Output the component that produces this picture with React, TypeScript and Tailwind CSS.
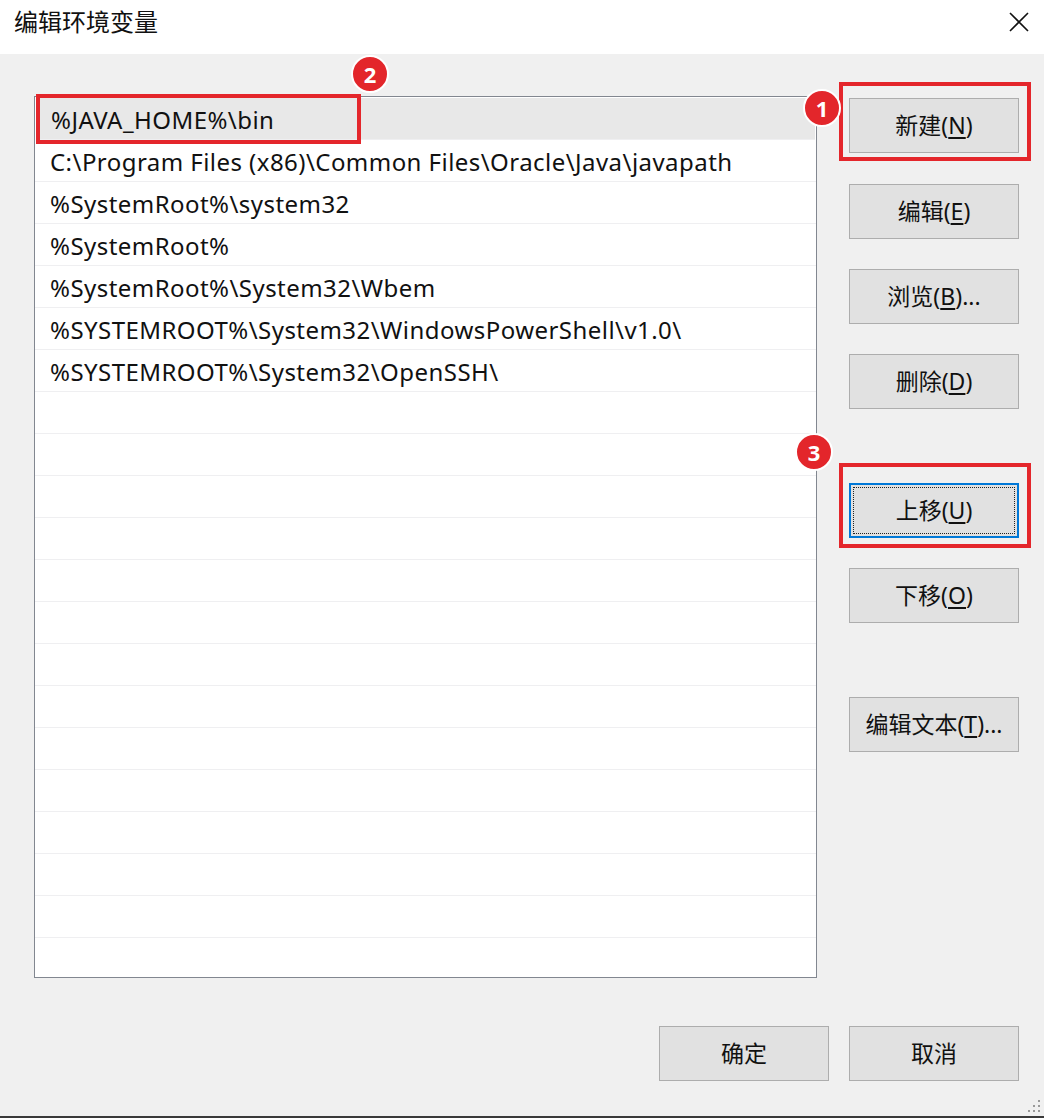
import React from 'react';

const paths = [
    '%JAVA_HOME%\\bin',
    'C:\\Program Files (x86)\\Common Files\\Oracle\\Java\\javapath',
    '%SystemRoot%\\system32',
    '%SystemRoot%',
    '%SystemRoot%\\System32\\Wbem',
    '%SYSTEMROOT%\\System32\\WindowsPowerShell\\v1.0\\',
    '%SYSTEMROOT%\\System32\\OpenSSH\\',
];

const rows = [...paths, ...Array(14).fill('')];

const font = { fontFamily: '"Noto Sans", "Noto Sans CJK SC", sans-serif' };

function Key({ label, k, suffix = '' }: { label: string; k?: string; suffix?: string }) {
    return (
        <span>
            {label}
            {k && (
                <>
                    (<span className="underline underline-offset-[3px]">{k}</span>)
                </>
            )}
            {suffix}
        </span>
    );
}

function WinButton({ children, focused = false, className = '' }: { children: React.ReactNode; focused?: boolean; className?: string }) {
    return (
        <button
            type="button"
            className={
                'relative w-[170px] h-[55px] bg-[#e1e1e1] text-[23px] text-[#111] flex items-center justify-center ' +
                (focused ? 'border-2 border-[#0078d7] ' : 'border border-[#adadad] ') +
                className
            }
        >
            {focused && <span className="absolute inset-[2px] border border-dotted border-[#222]" />}
            {children}
        </button>
    );
}

function Badge({ n, className }: { n: number; className: string }) {
    return (
        <div
            className={
                'absolute w-[38px] h-[38px] rounded-full bg-[#e3262b] border-2 border-white text-white text-[22px] font-bold flex items-center justify-center z-20 ' +
                className
            }
        >
            {n}
        </div>
    );
}

export default function App() {
    return (
        <div className="w-[1044px] h-[1118px] bg-[#f0f0f0] flex flex-col relative border-b-2 border-[#3a3a3a]" style={font}>
            {/* title bar */}
            <div className="h-[54px] bg-white flex items-center justify-between pl-[14px] pr-[14px]">
                <span className="text-[24px] text-[#111] -mt-[10px]">编辑环境变量</span>
                <svg width="22" height="22" viewBox="0 0 22 22" className="-mt-[10px]">
                    <path d="M2 2 L20 20 M20 2 L2 20" stroke="#111" strokeWidth="1.6" />
                </svg>
            </div>

            <div className="flex-1 flex flex-col">
                <div className="flex pt-[42px] pl-[34px]">
                    {/* list */}
                    <div className="relative w-[783px] h-[882px] border border-[#828790] bg-white">
                        <div className="h-full overflow-hidden pt-[1px]">
                            {rows.map((p, i) => (
                                <div
                                    key={i}
                                    className={
                                        'h-[42px] border-b border-[#efeff1] pl-[15px] pt-[3px] flex items-center text-[24px] tracking-[0.45px] text-[#111] whitespace-nowrap ' +
                                        (i === 0 ? 'bg-[#e8e8e8] mx-[1px]' : '')
                                    }
                                >
                                    {p}
                                </div>
                            ))}
                        </div>
                        {/* annotation 2 */}
                        <div className="absolute left-[1px] top-[-3px] w-[325px] h-[50px] border-[4px] border-[#e4262b] z-10" />
                        <Badge n={2} className="left-[316px] top-[-42px]" />
                    </div>

                    {/* right buttons */}
                    <div className="ml-[32px] pt-[2px] flex flex-col relative">
                        <div className="relative">
                            <div className="absolute left-[-10px] top-[-16px] w-[192px] h-[79px] border-[4px] border-[#e4262b]" />
                            <Badge n={1} className="left-[-46px] top-[-9px]" />
                            <WinButton>
                                <Key label="新建" k="N" />
                            </WinButton>
                        </div>
                        <WinButton className="mt-[31px]">
                            <Key label="编辑" k="E" />
                        </WinButton>
                        <WinButton className="mt-[30px]">
                            <Key label="浏览" k="B" suffix="..." />
                        </WinButton>
                        <WinButton className="mt-[30px]">
                            <Key label="删除" k="D" />
                        </WinButton>
                        <div className="relative mt-[74px]">
                            <div className="absolute left-[-10px] top-[-20px] w-[192px] h-[85px] border-[4px] border-[#e4262b]" />
                            <Badge n={3} className="left-[-54px] top-[-50px]" />
                            <WinButton focused>
                                <Key label="上移" k="U" />
                            </WinButton>
                        </div>
                        <WinButton className="mt-[30px]">
                            <Key label="下移" k="O" />
                        </WinButton>
                        <WinButton className="mt-[74px]">
                            <Key label="编辑文本" k="T" suffix="..." />
                        </WinButton>
                    </div>
                </div>

                {/* bottom buttons */}
                <div className="flex justify-end gap-[20px] pr-[25px] mt-[48px]">
                    <WinButton>确定</WinButton>
                    <WinButton>取消</WinButton>
                </div>
            </div>

            {/* resize grip */}
            <div className="absolute right-[4px] bottom-[4px] grid grid-cols-3 gap-[3px]">
                <span className="w-[2px] h-[2px]" />
                <span className="w-[2px] h-[2px]" />
                <span className="w-[2px] h-[2px] bg-[#999]" />
                <span className="w-[2px] h-[2px]" />
                <span className="w-[2px] h-[2px] bg-[#999]" />
                <span className="w-[2px] h-[2px] bg-[#999]" />
                <span className="w-[2px] h-[2px] bg-[#999]" />
                <span className="w-[2px] h-[2px] bg-[#999]" />
                <span className="w-[2px] h-[2px] bg-[#999]" />
            </div>
        </div>
    );
}
